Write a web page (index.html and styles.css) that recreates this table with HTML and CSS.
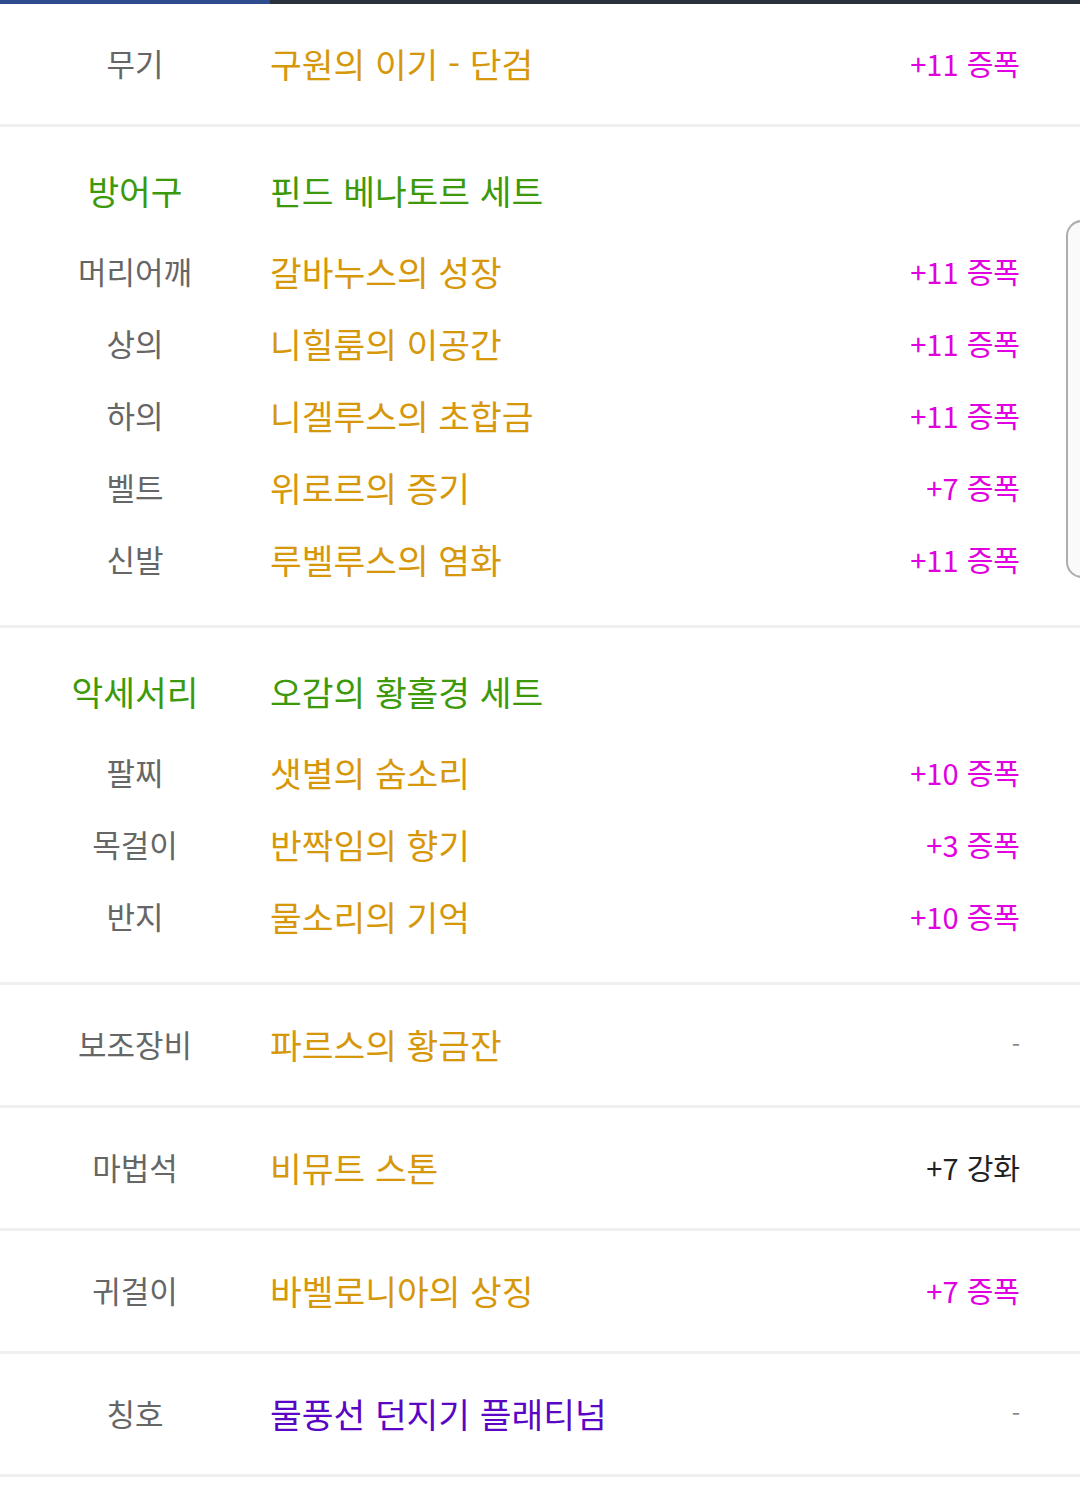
FILE: index.html
```html
<!DOCTYPE html>
<html lang="ko">
<head>
  <meta charset="UTF-8" />
  <meta name="viewport" content="width=device-width, initial-scale=1.0" />
  <title>장비 정보</title>
  <link rel="stylesheet" href="styles.css">
</head>
<body>
  <div class="top-bar"><div class="top-bar-fill"></div></div>

  <!-- 무기 -->
  <div class="section single">
    <div class="row">
      <span class="label">무기</span>
      <span class="value">구원의 이기 - 단검</span>
      <span class="extra up">+11 증폭</span>
    </div>
  </div>

  <!-- 방어구 -->
  <div class="section group">
    <div class="row head">
      <span class="label set">방어구</span>
      <span class="value set">핀드 베나토르 세트</span>
    </div>
    <div class="row">
      <span class="label">머리어깨</span>
      <span class="value">갈바누스의 성장</span>
      <span class="extra up">+11 증폭</span>
    </div>
    <div class="row">
      <span class="label">상의</span>
      <span class="value">니힐룸의 이공간</span>
      <span class="extra up">+11 증폭</span>
    </div>
    <div class="row">
      <span class="label">하의</span>
      <span class="value">니겔루스의 초합금</span>
      <span class="extra up">+11 증폭</span>
    </div>
    <div class="row">
      <span class="label">벨트</span>
      <span class="value">위로르의 증기</span>
      <span class="extra up">+7 증폭</span>
    </div>
    <div class="row">
      <span class="label">신발</span>
      <span class="value">루벨루스의 염화</span>
      <span class="extra up">+11 증폭</span>
    </div>
  </div>

  <!-- 악세서리 -->
  <div class="section group">
    <div class="row head">
      <span class="label set">악세서리</span>
      <span class="value set">오감의 황홀경 세트</span>
    </div>
    <div class="row">
      <span class="label">팔찌</span>
      <span class="value">샛별의 숨소리</span>
      <span class="extra up">+10 증폭</span>
    </div>
    <div class="row">
      <span class="label">목걸이</span>
      <span class="value">반짝임의 향기</span>
      <span class="extra up">+3 증폭</span>
    </div>
    <div class="row">
      <span class="label">반지</span>
      <span class="value">물소리의 기억</span>
      <span class="extra up">+10 증폭</span>
    </div>
  </div>

  <div class="section single">
    <div class="row">
      <span class="label">보조장비</span>
      <span class="value">파르스의 황금잔</span>
      <span class="extra none">-</span>
    </div>
  </div>

  <div class="section single">
    <div class="row">
      <span class="label">마법석</span>
      <span class="value">비뮤트 스톤</span>
      <span class="extra">+7 강화</span>
    </div>
  </div>

  <div class="section single">
    <div class="row">
      <span class="label">귀걸이</span>
      <span class="value">바벨로니아의 상징</span>
      <span class="extra up">+7 증폭</span>
    </div>
  </div>

  <div class="section single">
    <div class="row">
      <span class="label">칭호</span>
      <span class="value title">물풍선 던지기 플래티넘</span>
      <span class="extra none">-</span>
    </div>
  </div>

  <!-- scroll handle overlay -->
  <div class="scroll-handle"></div>
</body>
</html>
```

FILE: styles.css
```css
body {
  margin: 0;
  background-color: #fff;
  font-family: "Noto Sans CJK KR", "Noto Sans", sans-serif;
  position: relative;
  min-height: 1504px;
}
.top-bar {
  height: 4px;
  background-color: #2a313d;
}
.top-bar-fill {
  width: 270px;
  height: 4px;
  background-color: #2d4c8e;
}
.section {
  border-bottom: 3px solid #f0f0f0;
}
.section.single .row {
  height: 120px;
}
.section.group {
  padding: 28px 0 29px;
}
.row {
  display: flex;
  align-items: center;
  height: 72px;
  box-sizing: border-box;
  padding: 0 60px 3px 0;
}
.row.head {
  margin-bottom: 9px;
}
.label {
  width: 270px;
  flex-shrink: 0;
  text-align: center;
  font-size: 31px;
  color: #666;
}
.label.set {
  font-size: 34.5px;
  color: #3c9a0a;
}
.value {
  flex: 1;
  font-size: 34.5px;
  color: #d6980a;
}
.value.set {
  color: #3c9a0a;
}
.value.title {
  color: #5a06c4;
}
.extra {
  font-size: 29px;
  color: #222;
  text-align: right;
}
.extra.up {
  color: #e000e0;
}
.extra.none {
  color: #888;
  font-size: 24px;
}
.scroll-handle {
  position: absolute;
  left: 1066px;
  top: 220px;
  width: 30px;
  height: 354px;
  border: 2px solid #adadad;
  border-radius: 16px;
  background-color: #fafafa;
}
```
